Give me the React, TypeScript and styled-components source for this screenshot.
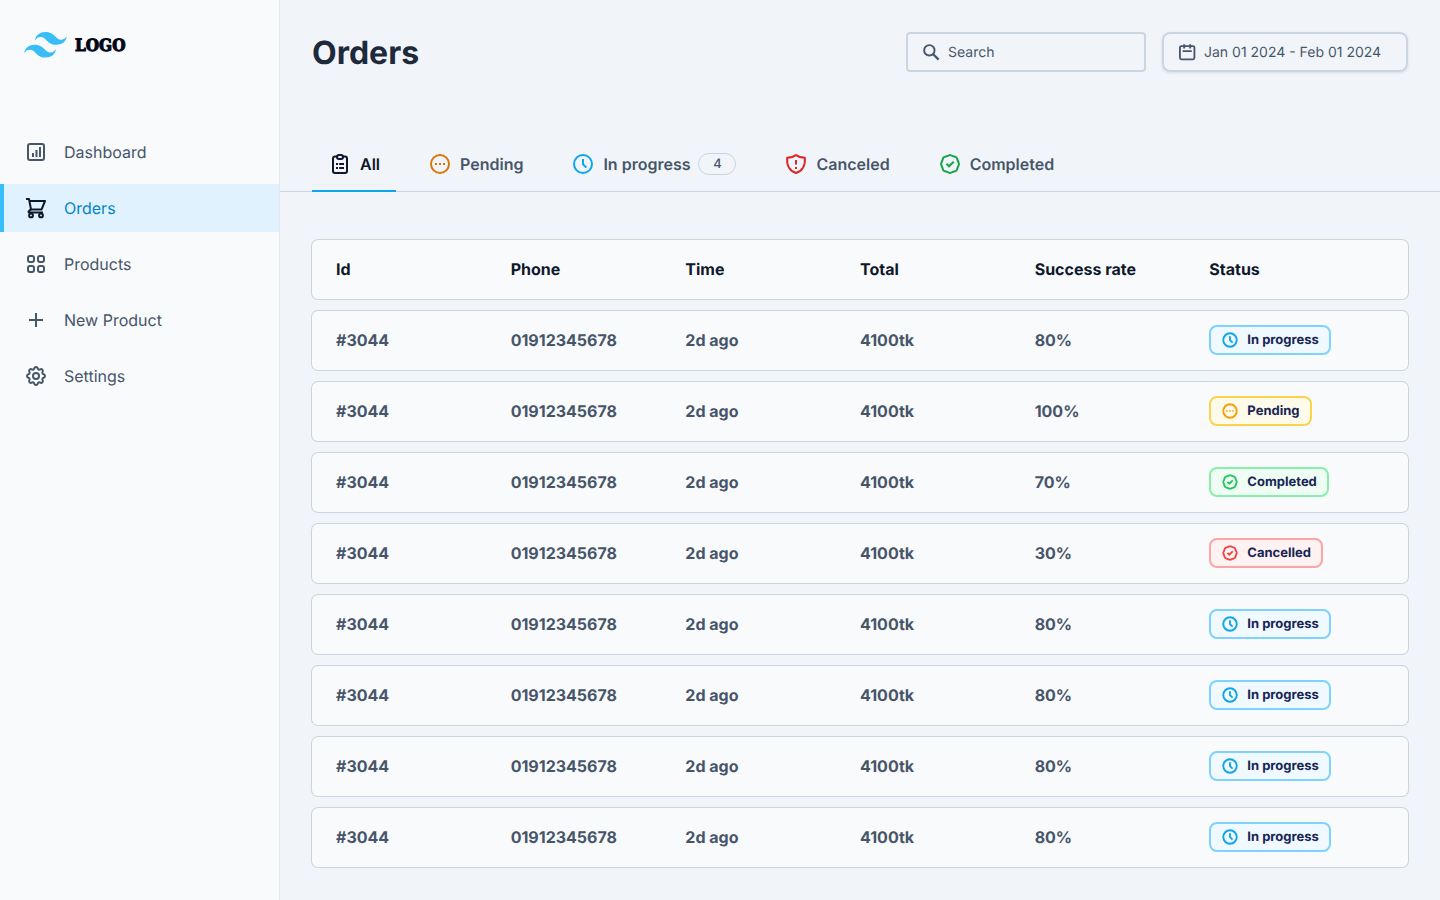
import React from 'react';
import styled, { createGlobalStyle } from 'styled-components';

const GlobalStyle = createGlobalStyle`
  *, *::before, *::after { box-sizing: border-box; }
  body {
    margin: 0;
    background: #f1f5f9;
    color: #475569;
    font-family: Inter, "Liberation Sans", sans-serif;
    font-size: 16px;
    line-height: 24px;
    text-rendering: geometricPrecision;
  }
`;

/* ---------- icons ---------- */

const Glyph = styled.svg<{ $size?: number; $color?: string; $stroke?: number }>`
  flex: none;
  display: block;
  width: ${(p) => p.$size ?? 24}px;
  height: ${(p) => p.$size ?? 24}px;
  color: ${(p) => p.$color ?? 'currentColor'};
  fill: none;
  stroke: currentColor;
  stroke-width: ${(p) => p.$stroke ?? 2};
`;

type IconProps = { size?: number; color?: string; stroke?: number };

const icon = (shape: React.ReactNode) =>
  function Icon({ size, color, stroke }: IconProps) {
    return (
      <Glyph viewBox="0 0 24 24" $size={size} $color={color} $stroke={stroke} aria-hidden="true">
        {shape}
      </Glyph>
    );
  };

const ChartIcon = icon(
  <>
    <rect x="4" y="4" width="16" height="16" rx="2" />
    <path d="M9 13v4M12.500 10v7M16 7v10" />
  </>
);

const CartIcon = icon(
  <>
    <path d="M2 3h3l2 10.4h10.6L21 5H5.4" strokeLinejoin="round" />
    <path d="M7 13.2l-2.2 2.1c-.5.5-.2 1.2.5 1.2H19" />
    <circle cx="7" cy="19.4" r="1.9" />
    <circle cx="17" cy="19.4" r="1.9" />
  </>
);

const GridIcon = icon(
  <>
    <rect x="4" y="4" width="6" height="6" rx="2" />
    <rect x="14" y="4" width="6" height="6" rx="2" />
    <rect x="4" y="14" width="6" height="6" rx="2" />
    <rect x="14" y="14" width="6" height="6" rx="2" />
  </>
);

const PlusIcon = icon(<path d="M12 5v14M5 12h14" />);

const GearIcon = icon(
  <>
    <path
      strokeLinejoin="round"
      d="M10.325 4.317c.426-1.756 2.924-1.756 3.35 0a1.724 1.724 0 0 0 2.573 1.066c1.543-.94 3.31.826 2.37 2.37a1.724 1.724 0 0 0 1.065 2.572c1.756.426 1.756 2.924 0 3.35a1.724 1.724 0 0 0-1.066 2.573c.94 1.543-.826 3.31-2.37 2.37a1.724 1.724 0 0 0-2.572 1.065c-.426 1.756-2.924 1.756-3.35 0a1.724 1.724 0 0 0-2.573-1.066c-1.543.94-3.31-.826-2.37-2.37a1.724 1.724 0 0 0-1.065-2.572c-1.756-.426-1.756-2.924 0-3.35a1.724 1.724 0 0 0 1.066-2.573c-.94-1.543.826-3.31 2.37-2.37 1 .608 2.296.07 2.572-1.065z"
    />
    <circle cx="12" cy="12" r="3" />
  </>
);

const SearchIcon = icon(
  <>
    <circle cx="10.2" cy="10.2" r="5.7" strokeWidth="2.1" />
    <path d="M14.400 14.400l5.900 5.900" strokeWidth="2.500" />
  </>
);

const CalendarIcon = icon(
  <>
    <rect x="4.300" y="5.600" width="15.800" height="14.400" rx="1.600" />
    <path d="M8.900 3.600v4.600M15.500 3.600v4.600M7.200 11h10" />
  </>
);

const ClipboardIcon = icon(
  <>
    <path d="M9 4.400H7a2 2 0 0 0-2 2V19a2 2 0 0 0 2 2h10a2 2 0 0 0 2-2V6.400a2 2 0 0 0-2-2h-2" />
    <rect x="9" y="3" width="6" height="4" rx="2" />
    <path d="M8 12h2M11.200 12H16M8 16h2M11.200 16H16" />
  </>
);

const DotsIcon = icon(
  <>
    <circle cx="12" cy="12" r="9" />
    <path d="M7 12h2M11 12h2M15 12h2" strokeWidth="2" />
  </>
);

const ClockIcon = icon(
  <>
    <circle cx="12" cy="12" r="9" />
    <path d="M12 7v5.200l3.400 3.400" strokeLinejoin="round" />
  </>
);

const ShieldIcon = icon(
  <>
    <path
      strokeLinejoin="round"
      d="M12 3c-2.300 1.900-5.200 2.700-8.800 2.700C2.400 13.200 5.600 19 12 21c6.400-2 9.600-7.800 8.800-15.300C17.200 5.700 14.300 4.900 12 3z"
    />
    <path d="M12 8v4.500M12 15v2" />
  </>
);

const CheckBadgeIcon = icon(
  <>
    <path
      strokeLinejoin="round"
      d="M10.900 3.300Q12 2.700 13.100 3.300L15.500 4.300 17.400 4.900Q18.700 5.300 19.100 6.600L19.700 8.500 20.700 10.900Q21.300 12 20.700 13.100L19.700 15.500 19.100 17.400Q18.700 18.700 17.400 19.100L15.500 19.700 13.100 20.700Q12 21.300 10.900 20.700L8.500 19.700 6.600 19.100Q5.300 18.700 4.900 17.400L4.300 15.500 3.300 13.100Q2.700 12 3.300 10.900L4.300 8.500 4.900 6.600Q5.300 5.300 6.600 4.900L8.500 4.300z"
    />
    <path d="M8.500 11.800l2.500 2.500 4.700-4.500" />
  </>
);

const MarkSvg = styled.svg`
  display: block;
  width: 43px;
  height: 26px;
  fill: #38bdf8;
`;

/* ---------- page frame ---------- */

const Page = styled.div`
  display: grid;
  grid-template-columns: 280px minmax(0, 1fr);
  min-height: 100vh;
`;

const Sidebar = styled.aside`
  display: flex;
  flex-direction: column;
  gap: 70px;
  padding-top: 32px;
  background: #f8fafc;
  border-right: 1px solid #e2e8f0;
`;

const Brand = styled.a`
  display: flex;
  align-items: center;
  gap: 8px;
  height: 26px;
  padding-left: 24px;
  color: #020617;
  text-decoration: none;
`;

const BrandName = styled.span`
  padding-top: 2px;
  font-family: "DejaVu Serif Condensed", "DejaVu Serif", serif;
  font-size: 17px;
  font-weight: 700;
  -webkit-text-stroke: 1px #020617;
`;

const Nav = styled.nav`
  display: flex;
  flex-direction: column;
  gap: 8px;
`;

const NavLink = styled.a<{ $active?: boolean }>`
  display: flex;
  align-items: center;
  gap: 16px;
  height: 48px;
  padding-left: 20px;
  border-left: 4px solid ${(p) => (p.$active ? '#38bdf8' : 'transparent')};
  background: ${(p) => (p.$active ? '#e0f2fe' : 'transparent')};
  color: ${(p) => (p.$active ? '#0284c7' : '#475569')};
  text-decoration: none;
`;

const Label = styled.span`
  padding-bottom: 1px;
`;

const Main = styled.main`
  display: flex;
  flex-direction: column;
  padding-bottom: 32px;
`;

const Header = styled.header`
  display: flex;
  align-items: flex-start;
  justify-content: space-between;
  padding: 32px 32px 62px;
`;

const Title = styled.h1`
  margin: 0;
  color: #1e293b;
  font-size: 32px;
  line-height: 42px;
  font-weight: 700;
`;

const Tools = styled.div`
  display: flex;
  gap: 16px;
`;

const SearchBox = styled.label`
  display: flex;
  align-items: center;
  gap: 6px;
  width: 240px;
  height: 40px;
  padding: 0 12px;
  border: 2px solid #cbd5e1;
  border-radius: 4px;
`;

const SearchInput = styled.input`
  flex: 1;
  min-width: 0;
  padding: 2px 0 0;
  border: 0;
  outline: 0;
  background: transparent;
  color: #475569;
  font: inherit;
  font-size: 14px;
  text-rendering: inherit;
  &::placeholder { color: #475569; opacity: 1; }
`;

const DateButton = styled.button`
  display: flex;
  align-items: center;
  gap: 6px;
  width: 246px;
  height: 40px;
  padding: 0 12px;
  border: 2px solid #cbd5e1;
  border-radius: 8px;
  background: transparent;
  box-shadow: 0 1px 3px rgba(15, 23, 42, 0.1);
  color: #475569;
  font: inherit;
  font-size: 14px;
  text-rendering: inherit;
  white-space: nowrap;
`;

const DateRange = styled.span`
  padding-top: 2px;
`;

/* ---------- tabs ---------- */

const Tabs = styled.div`
  display: flex;
  gap: 16px;
  padding: 0 32px;
  box-shadow: inset 0 -1px #cbd5e1;
`;

const Tab = styled.button<{ $active?: boolean }>`
  display: flex;
  align-items: center;
  gap: 8px;
  height: 56px;
  padding: 0 16px;
  border: 0;
  background: transparent;
  box-shadow: ${(p) => (p.$active ? 'inset 0 -2px #0ea5e9' : 'none')};
  color: ${(p) => (p.$active ? '#0f172a' : '#475569')};
  font: inherit;
  font-weight: 600;
  text-rendering: inherit;
`;

const Count = styled.span`
  display: flex;
  align-items: center;
  justify-content: center;
  width: 38px;
  height: 22px;
  border: 1px solid #cbd5e1;
  border-radius: 11px;
  font-size: 13px;
  font-weight: 500;
`;

/* ---------- orders table ---------- */

const Table = styled.table`
  display: block;
  margin: 48px 32px 0;
`;

const RowGroup = styled.tbody`
  display: grid;
  gap: 12px;
  &:not(:first-child) { margin-top: 12px; }
`;

const Row = styled.tr`
  display: grid;
  grid-template-columns: repeat(6, minmax(0, 1fr));
  align-items: center;
  height: 59px;
  padding: 0 24px 1px;
  border-radius: 6px;
  background: #f8fafc;
  box-shadow: 0 0 0 1px #cbd5e1;
`;

const HeadCell = styled.th`
  padding: 0;
  color: #0f172a;
  font-weight: 700;
  text-align: left;
`;

const Cell = styled.td`
  padding: 0;
  font-weight: 700;
`;

const Chip = styled.span<{ $border: string; $fill: string }>`
  display: flex;
  align-items: center;
  gap: 8px;
  width: fit-content;
  height: 30px;
  padding: 0 10px;
  border: 2px solid ${(p) => p.$border};
  border-radius: 8px;
  background: ${(p) => p.$fill};
  color: #172554;
  font-size: 13px;
  line-height: 20px;
`;

const statuses = {
  'In progress': { Icon: ClockIcon, color: '#0ea5e9', border: '#7dd3fc', fill: '#f0f9ff' },
  Pending: { Icon: DotsIcon, color: '#f59e0b', border: '#fcd34d', fill: '#fffbeb' },
  Completed: { Icon: CheckBadgeIcon, color: '#22c55e', border: '#86efac', fill: '#f0fdf4' },
  Cancelled: { Icon: CheckBadgeIcon, color: '#ef4444', border: '#fca5a5', fill: '#fef2f2' },
};

type Status = keyof typeof statuses;

const StatusChip = ({ status }: { status: Status }) => {
  const { Icon, color, border, fill } = statuses[status];
  return (
    <Chip $border={border} $fill={fill}>
      <Icon size={18} color={color} stroke={2.5} />
      {status}
    </Chip>
  );
};

const navItems = [
  { label: 'Dashboard', Icon: ChartIcon },
  { label: 'Orders', Icon: CartIcon, active: true },
  { label: 'Products', Icon: GridIcon },
  { label: 'New Product', Icon: PlusIcon },
  { label: 'Settings', Icon: GearIcon },
];

const tabs = [
  { label: 'All', Icon: ClipboardIcon, color: '#0f172a', active: true },
  { label: 'Pending', Icon: DotsIcon, color: '#d97706' },
  { label: 'In progress', Icon: ClockIcon, color: '#0ea5e9', count: 4 },
  { label: 'Canceled', Icon: ShieldIcon, color: '#dc2626' },
  { label: 'Completed', Icon: CheckBadgeIcon, color: '#16a34a' },
];

const columns = ['Id', 'Phone', 'Time', 'Total', 'Success rate', 'Status'];

const orders: { rate: string; status: Status }[] = [
  { rate: '80%', status: 'In progress' },
  { rate: '100%', status: 'Pending' },
  { rate: '70%', status: 'Completed' },
  { rate: '30%', status: 'Cancelled' },
  { rate: '80%', status: 'In progress' },
  { rate: '80%', status: 'In progress' },
  { rate: '80%', status: 'In progress' },
  { rate: '80%', status: 'In progress' },
];

export default function App() {
  return (
    <>
      <GlobalStyle />
      <Page>
        <Sidebar>
          <Brand href="#">
            <MarkSvg viewBox="0 0 54 33" preserveAspectRatio="none" aria-hidden="true">
              <path d="M27 0c-7.200 0-11.700 3.600-13.500 10.800 2.700-3.600 5.850-4.950 9.450-4.050 2.054.513 3.522 2.004 5.147 3.653C30.744 13.090 33.808 16.200 40.500 16.200c7.200 0 11.700-3.600 13.500-10.800-2.700 3.600-5.850 4.950-9.450 4.050-2.054-.513-3.522-2.004-5.147-3.653C36.756 3.110 33.692 0 27 0zM13.500 16.200C6.300 16.200 1.800 19.800 0 27c2.700-3.600 5.850-4.950 9.450-4.050 2.054.514 3.522 2.004 5.147 3.653C17.244 29.290 20.308 32.400 27 32.400c7.200 0 11.700-3.600 13.500-10.800-2.700 3.600-5.850 4.950-9.450 4.050-2.054-.513-3.522-2.004-5.147-3.653C23.256 19.310 20.192 16.200 13.500 16.200z" />
            </MarkSvg>
            <BrandName>LOGO</BrandName>
          </Brand>
          <Nav>
            {navItems.map(({ label, Icon, active }) => (
              <NavLink key={label} href="#" $active={active} aria-current={active ? 'page' : undefined}>
                <Icon color={active ? '#0f172a' : undefined} />
                <Label>{label}</Label>
              </NavLink>
            ))}
          </Nav>
        </Sidebar>
        <Main>
          <Header>
            <Title>Orders</Title>
            <Tools>
              <SearchBox>
                <SearchIcon size={22} />
                <SearchInput type="text" placeholder="Search" aria-label="Search" />
              </SearchBox>
              <DateButton type="button">
                <CalendarIcon size={22} />
                <DateRange>Jan 01 2024 - Feb 01 2024</DateRange>
              </DateButton>
            </Tools>
          </Header>
          <Tabs role="tablist">
            {tabs.map(({ label, Icon, color, active, count }) => (
              <Tab key={label} type="button" role="tab" aria-selected={!!active} $active={active}>
                <Icon color={color} />
                <Label>{label}</Label>
                {count && <Count>{count}</Count>}
              </Tab>
            ))}
          </Tabs>
          <Table>
            <RowGroup as="thead">
              <Row>
                {columns.map((name) => (
                  <HeadCell key={name} scope="col">{name}</HeadCell>
                ))}
              </Row>
            </RowGroup>
            <RowGroup>
              {orders.map(({ rate, status }, i) => (
                <Row key={i}>
                  <Cell>#3044</Cell>
                  <Cell>01912345678</Cell>
                  <Cell>2d ago</Cell>
                  <Cell>4100tk</Cell>
                  <Cell>{rate}</Cell>
                  <Cell><StatusChip status={status} /></Cell>
                </Row>
              ))}
            </RowGroup>
          </Table>
        </Main>
      </Page>
    </>
  );
}
